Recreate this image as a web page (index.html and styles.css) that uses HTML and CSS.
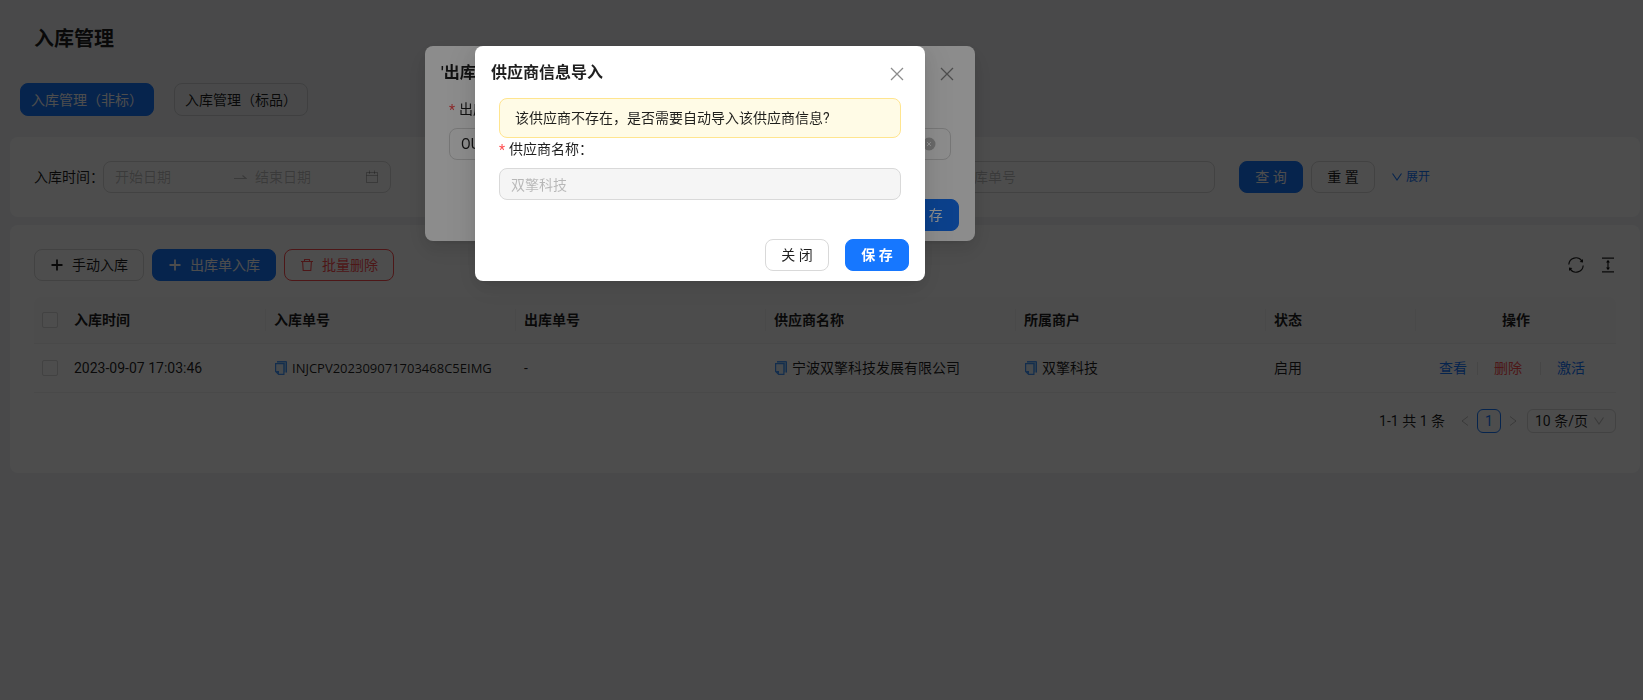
FILE: index.html
```
<!DOCTYPE html>
<html lang="zh-CN">
<head>
<meta charset="utf-8">
<title>入库管理</title>
<link rel="stylesheet" href="styles.css">
</head>
<body>
<svg class="defs" aria-hidden="true">
  <symbol id="plus" viewBox="0 0 14 14"><path d="M7 1.500v11M1.500 7h11" fill="none" stroke="currentColor" stroke-width="1.800"/></symbol>
  <symbol id="trash" viewBox="0 0 14 14"><path d="M1 3.500h12M4.500 3.500V1.500h5v2M2.600 3.500l.6 9h7.600l.6-9" fill="none" stroke="currentColor" stroke-width="1.100"/></symbol>
  <symbol id="copy" viewBox="0 0 14 14"><path d="M3 .5h9.500v11H10V2.500H3z" fill="#91caff"/><path d="M3 .6h9.500v10.900" fill="none" stroke="#4096ff" stroke-width="1"/><path d="M1.600 2.600h8.300v10.800H4.600l-3-3z" fill="#e6f4ff" stroke="#4096ff" stroke-width="1.200"/><path d="M1.600 10h3.400v3.400z" fill="#4096ff"/></symbol>
  <symbol id="close" viewBox="0 0 14 14"><path d="M1 1l12 12M13 1L1 13" fill="none" stroke="currentColor" stroke-width="1.300"/></symbol>
  <symbol id="down" viewBox="0 0 12 12"><path d="M1.500 2.500L6 9l4.500-6.500" fill="none" stroke="currentColor" stroke-width="1.100"/></symbol>
  <symbol id="left" viewBox="0 0 12 12"><path d="M9 1.500L3 6l6 4.500" fill="none" stroke="currentColor"/></symbol>
  <symbol id="right" viewBox="0 0 12 12"><path d="M3 1.500L9 6l-6 4.500" fill="none" stroke="currentColor"/></symbol>
</svg>

<main class="page">
  <h1 class="title">入库管理</h1>
  <nav class="tabs">
    <button class="btn btn-primary tab">入库管理（非标）</button>
    <button class="btn tab">入库管理（标品）</button>
  </nav>

  <form class="card search">
    <div class="field">
      <label for="start">入库时间：</label>
      <div class="range">
        <input id="start" placeholder="开始日期">
        <svg class="swap" viewBox="0 0 14 14"><path d="M1 8.500h12L9.500 5.500" fill="none" stroke="currentColor" stroke-width="1.200"/></svg>
        <input aria-label="结束日期" placeholder="结束日期">
        <svg class="icon" viewBox="0 0 14 14"><path d="M1.500 2.500h11v10h-11zM4.500 .5v3.500M9.500 .5v3.500M1.500 5.500h11" fill="none" stroke="currentColor"/></svg>
      </div>
    </div>
    <div class="field field-no">
      <label for="in-no">入库单号：</label>
      <input id="in-no" class="input" placeholder="请输入入库单号">
    </div>
    <div class="field field-no">
      <label for="out-no">出库单号：</label>
      <input id="out-no" class="input" placeholder="请输入出库单号">
    </div>
    <div class="actions">
      <button type="button" class="btn btn-primary">查 询</button>
      <button type="button" class="btn">重 置</button>
      <a class="expand" href="#"><svg class="icon-s"><use href="#down"/></svg>展开</a>
    </div>
  </form>

  <section class="card list">
    <div class="toolbar">
      <button class="btn"><svg class="icon"><use href="#plus"/></svg>手动入库</button>
      <button class="btn btn-primary"><svg class="icon"><use href="#plus"/></svg>出库单入库</button>
      <button class="btn btn-danger"><svg class="icon"><use href="#trash"/></svg>批量删除</button>
      <div class="tools">
        <svg class="icon-l" viewBox="0 0 16 16"><path d="M.8 7.500A7.200 7.200 0 0 1 13.800 3.800M15.200 8.500A7.200 7.200 0 0 1 2.200 12.200" fill="none" stroke="currentColor" stroke-width="1.200"/><path d="M15 2v3.600l-3.400-.7zM1 14v-3.600l3.400.7z" fill="currentColor"/></svg>
        <svg class="icon-l" viewBox="0 0 16 16"><path d="M2 1.200h12M2 14.800h12" stroke="currentColor" stroke-width="1.300"/><path d="M8 4v8" stroke="currentColor" stroke-width="1.200"/><path d="M8 2.800l2 2.700H6zM8 13.200l2-2.700H6z" fill="currentColor"/></svg>
      </div>
    </div>

    <table class="table">
      <colgroup><col class="c-check"><col class="c-m"><col class="c-l"><col class="c-l"><col class="c-l"><col class="c-l"><col class="c-s"><col class="c-m"></colgroup>
      <thead>
        <tr><th class="check"><input type="checkbox" aria-label="全选"></th><th>入库时间</th><th>入库单号</th><th>出库单号</th><th>供应商名称</th><th>所属商户</th><th>状态</th><th class="ops-head">操作</th></tr>
      </thead>
      <tbody>
        <tr>
          <td class="check"><input type="checkbox" aria-label="选择"></td>
          <td>2023-09-07 17:03:46</td>
          <td><span class="copy code"><svg class="icon"><use href="#copy"/></svg>INJCPV202309071703468C5EIMG</span></td>
          <td>-</td>
          <td><span class="copy"><svg class="icon"><use href="#copy"/></svg>宁波双擎科技发展有限公司</span></td>
          <td><span class="copy"><svg class="icon"><use href="#copy"/></svg>双擎科技</span></td>
          <td>启用</td>
          <td><div class="ops"><a href="#">查看</a><i></i><a class="wide danger" href="#">删除</a><i></i><a class="wide" href="#">激活</a></div></td>
        </tr>
      </tbody>
    </table>

    <div class="pager">
      <span class="total">1-1 共 1 条</span>
      <button class="step" aria-label="上一页"><svg class="icon-s"><use href="#left"/></svg></button>
      <button class="current">1</button>
      <button class="step" aria-label="下一页"><svg class="icon-s"><use href="#right"/></svg></button>
      <div class="size"><select aria-label="每页条数"><option>10 条/页</option></select><svg class="icon-s"><use href="#down"/></svg></div>
    </div>
  </section>
</main>

<div class="mask">
  <section class="modal modal-out" role="dialog" aria-label="出库单入库">
    <header class="modal-head"><h2>'出库单入库</h2><button class="close" aria-label="关闭"><svg class="icon"><use href="#close"/></svg></button></header>
    <div class="modal-body">
      <label class="required" for="out-code">出库单号：</label>
      <div class="clearable">
        <input id="out-code" class="input" value="OUT202309">
        <svg class="icon clear" viewBox="0 0 14 14"><circle cx="7" cy="7" r="6.500" fill="#bfbfbf"/><path d="M5 5l4 4M9 5L5 9" stroke="#fff"/></svg>
      </div>
    </div>
    <footer class="modal-foot"><button class="btn">关 闭</button><button class="btn btn-primary">保 存</button></footer>
  </section>
</div>

<div class="mask">
  <section class="modal modal-supplier" role="dialog" aria-label="供应商信息导入">
    <header class="modal-head"><h2>供应商信息导入</h2><button class="close" aria-label="关闭"><svg class="icon"><use href="#close"/></svg></button></header>
    <div class="modal-body">
      <div class="alert">该供应商不存在，是否需要自动导入该供应商信息?</div>
      <label class="required" for="supplier">供应商名称：</label>
      <input id="supplier" class="input" value="双擎科技" disabled>
    </div>
    <footer class="modal-foot"><button class="btn">关 闭</button><button class="btn btn-primary strong">保 存</button></footer>
  </section>
</div>
</body>
</html>
```

FILE: styles.css
```
* { box-sizing: border-box; }

body {
  margin: 0;
  background: #f0f2f5;
  color: rgba(0, 0, 0, 0.88);
  font: 14px/22px Roboto, "Noto Sans CJK SC", sans-serif;
}

input, button, select { font: inherit; color: inherit; }
h1, h2 { margin: 0; }
a { color: #1677ff; text-decoration: none; }
.defs { position: absolute; width: 0; height: 0; }
.icon { width: 14px; height: 14px; flex: none; }
.icon-s { width: 12px; height: 12px; flex: none; }
.icon-l { width: 16px; height: 16px; flex: none; }

.page { padding: 22px 3px 0 10px; }
.title { padding-left: 24px; font-size: 20px; line-height: 34px; font-weight: 600; }
.tabs { display: flex; gap: 20px; padding: 27px 10px 21px; }

.btn {
  display: inline-flex;
  align-items: center;
  justify-content: center;
  gap: 8px;
  min-width: 64px;
  height: 32px;
  padding: 0 15px;
  border: 1px solid #d9d9d9;
  border-radius: 8px;
  background: #fff;
  white-space: nowrap;
}
.btn-primary { background: #1677ff; border-color: #1677ff; color: #fff; }
.btn-danger { border-color: #ff4d4f; color: #ff4d4f; }
.strong { font-weight: 700; }
.tab { height: 33px; padding: 0 10px; }
.tab:not(.btn-primary) { background: transparent; border-color: #d0d1d3; }

.card { background: #fff; border-radius: 8px; }
.search { display: flex; align-items: center; gap: 24px; padding: 24px; margin-bottom: 8px; }
.field { display: flex; align-items: center; flex: 0 1 357px; min-width: 0; }
.field-no { flex-basis: 388px; padding-left: 10px; }
.field label { flex: none; width: 69px; white-space: nowrap; }

.range, .input {
  height: 32px;
  border: 1px solid #d9d9d9;
  border-radius: 8px;
  background: #fff;
}
.input { width: 100%; min-width: 0; padding: 0 11px; }
.input:disabled { background: #f5f5f5; color: rgba(0, 0, 0, 0.25); }
.input::placeholder, .range input::placeholder { color: rgba(0, 0, 0, 0.25); }
.range { display: flex; align-items: center; flex: 1; min-width: 0; padding: 0 11px; color: rgba(0, 0, 0, 0.25); }
.range input { flex: 1; min-width: 0; padding: 0; border: 0; background: none; }
.swap { width: 14px; height: 14px; margin: 0 8px; flex: none; }
.actions { display: flex; align-items: center; gap: 8px; flex: none; }
.expand { display: flex; align-items: center; gap: 3px; margin-left: 8px; font-size: 12px; }

.list { padding: 24px 24px 40px; }
.toolbar { display: flex; gap: 8px; margin-bottom: 16px; }
.tools { display: flex; align-items: center; gap: 16px; margin-left: auto; }

.table { width: 100%; table-layout: fixed; border-collapse: separate; border-spacing: 0; }
.c-check { width: 32px; }
.c-s { width: 150px; }
.c-m { width: 200px; }
.c-l { width: 250px; }
.table th, .table td { padding: 12px 8px; border-bottom: 1px solid #f0f0f0; text-align: left; white-space: nowrap; }
.table th {
  font-weight: 600;
  background: linear-gradient(#f0f0f0, #f0f0f0) right center / 1px 22px no-repeat #fafafa;
}
.table th:first-child { background: #fafafa; border-top-left-radius: 8px; }
.table th:last-child { background: #fafafa; border-top-right-radius: 8px; }
.table td { padding: 13px 8px; }
.table input {
  appearance: none;
  display: block;
  width: 16px;
  height: 16px;
  margin: 0;
  border: 1px solid #d9d9d9;
  border-radius: 2px;
  background: #fff;
}
.table .ops-head { text-align: center; }
.copy { display: flex; align-items: center; gap: 4px; }
.code { font-family: "Open Sans", sans-serif; font-size: 13px; }
.ops { display: flex; align-items: center; justify-content: center; }
.ops i { width: 1px; height: 13px; margin: 0 16px 0 10px; background: #e8e8e8; }
.ops .wide { margin-right: 8px; }
.ops .danger { color: #ff4d4f; }

.pager { display: flex; align-items: center; justify-content: flex-end; padding-top: 16px; }
.total { margin-right: 8px; }
.pager button { display: flex; align-items: center; justify-content: center; width: 24px; height: 24px; padding: 0; border: 0; background: none; border-radius: 6px; }
.pager .step { color: rgba(0, 0, 0, 0.25); }
.pager .current { border: 1px solid #1677ff; color: #1677ff; }
.size { display: flex; align-items: center; width: 89px; height: 24px; margin-left: 2px; padding: 0 10px 0 7px; border: 1px solid #d9d9d9; border-radius: 6px; }
.size select { flex: 1; min-width: 0; padding: 0; appearance: none; border: 0; background: none; }
.size svg { color: rgba(0, 0, 0, 0.25); }

.mask {
  position: fixed;
  inset: 0;
  display: flex;
  align-items: flex-start;
  justify-content: center;
  padding: 46px 243px 0 0;
  background: rgba(0, 0, 0, 0.45);
}
.modal {
  padding: 14px 16px 10px;
  background: #fff;
  border-radius: 8px;
  box-shadow: 0 6px 16px rgba(0, 0, 0, 0.08), 0 3px 6px -4px rgba(0, 0, 0, 0.12), 0 9px 28px 8px rgba(0, 0, 0, 0.05);
}
.modal-out { width: 550px; }
.modal-supplier { width: 450px; }
.modal-head { display: flex; align-items: flex-start; justify-content: space-between; height: 38px; }
.modal-head h2 { font-size: 16px; line-height: 26px; font-weight: 600; }
.close { display: flex; padding: 7px 5px; border: 0; background: none; color: rgba(0, 0, 0, 0.45); }
.modal-body { padding: 0 8px 39px; }
.required { display: block; height: 30px; }
.required::before { content: "*"; margin-right: 4px; color: #ff4d4f; vertical-align: middle; }
.clearable { position: relative; }
.clear { position: absolute; right: 15px; top: 9px; }
.alert { padding: 8px 15px; border: 1px solid #ffe58f; border-radius: 8px; background: #fffbe6; }
.modal-foot { display: flex; justify-content: flex-end; gap: 16px; }
```
